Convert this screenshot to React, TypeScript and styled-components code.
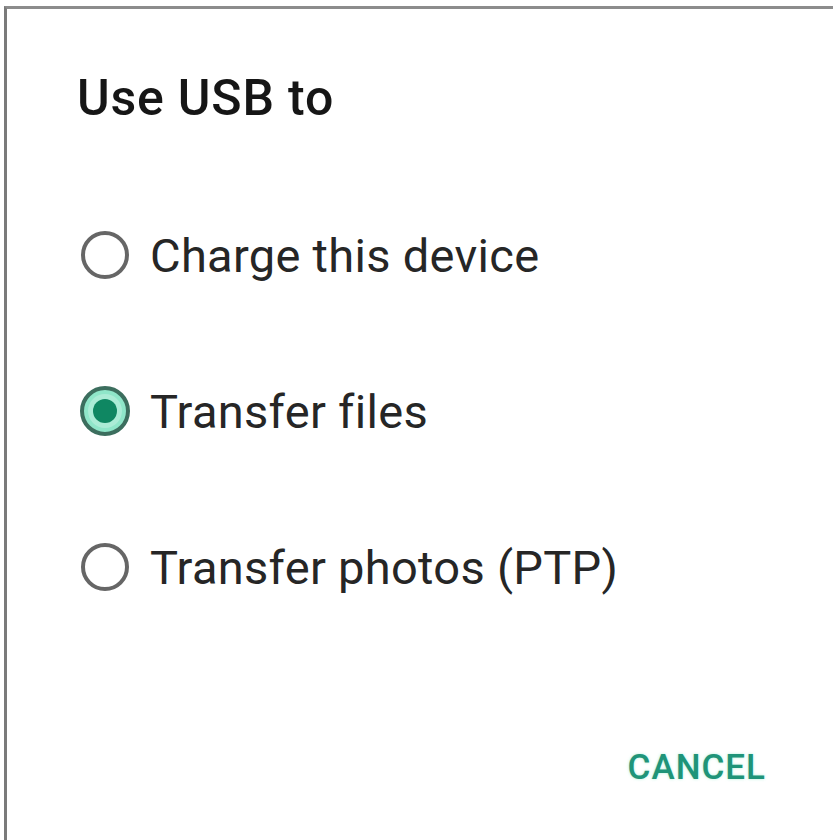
import React, { useState } from 'react';
import styled, { createGlobalStyle } from 'styled-components';

const GlobalStyle = createGlobalStyle`
    html, body {
        margin: 0;
        padding: 0;
        background: #ffffff;
    }
    body {
        font-family: Roboto, "Liberation Sans", sans-serif;
    }
`;

const Frame = styled.div`
    margin: 6px 0 0 4px;
    width: 829px;
    height: 834px;
    box-sizing: border-box;
    border-top: 3px solid #8c8c8c;
    border-left: 3px solid #7a7a7a;
    background: #ffffff;
    display: flex;
    flex-direction: column;
`;

const Title = styled.h2`
    margin: 59px 0 0 70px;
    font-size: 50px;
    line-height: 60px;
    font-weight: 500;
    color: #161616;
    letter-spacing: 0.8px;
`;

const OptionList = styled.div`
    margin-top: 49px;
    display: flex;
    flex-direction: column;
`;

const Option = styled.label`
    height: 156px;
    padding-left: 71px;
    display: flex;
    align-items: center;
    gap: 18px;
    cursor: pointer;
`;

const OptionText = styled.span`
    font-size: 47px;
    line-height: 1;
    color: #262626;
    letter-spacing: 0.3px;
`;

const Footer = styled.div`
    margin-top: auto;
    padding: 0 67px 52px 0;
    display: flex;
    justify-content: flex-end;
`;

const TextButton = styled.button`
    border: none;
    background: none;
    padding: 0;
    font-family: Roboto, "Liberation Sans", sans-serif;
    font-size: 35px;
    line-height: 40px;
    font-weight: 500;
    letter-spacing: 1px;
    color: #1f9479;
    text-shadow: 0 0 3px rgba(120, 230, 190, 0.6);
    cursor: pointer;
`;

const RadioIcon: React.FC<{ checked: boolean }> = ({ checked }) =>
    checked ? (
        <svg width="54" height="54" viewBox="0 0 54 54">
            <circle cx="27" cy="27" r="23" fill="#8fe6c9" stroke="#3c6e5e" strokeWidth="4" />
            <circle cx="27" cy="27" r="17" fill="#ffffff" opacity="0.25" />
            <circle cx="27" cy="27" r="12" fill="#0f8762" />
        </svg>
    ) : (
        <svg width="54" height="54" viewBox="0 0 54 54">
            <circle cx="27" cy="27" r="22" fill="none" stroke="#666666" strokeWidth="4" />
        </svg>
    );

const options = ['Charge this device', 'Transfer files', 'Transfer photos (PTP)'];

export default function App() {
    const [selected, setSelected] = useState(1);

    return (
        <>
            <GlobalStyle />
            <Frame>
                <Title>Use USB to</Title>
                <OptionList>
                    {options.map((label, i) => (
                        <Option key={label} onClick={() => setSelected(i)}>
                            <RadioIcon checked={selected === i} />
                            <OptionText>{label}</OptionText>
                        </Option>
                    ))}
                </OptionList>
                <Footer>
                    <TextButton>CANCEL</TextButton>
                </Footer>
            </Frame>
        </>
    );
}
